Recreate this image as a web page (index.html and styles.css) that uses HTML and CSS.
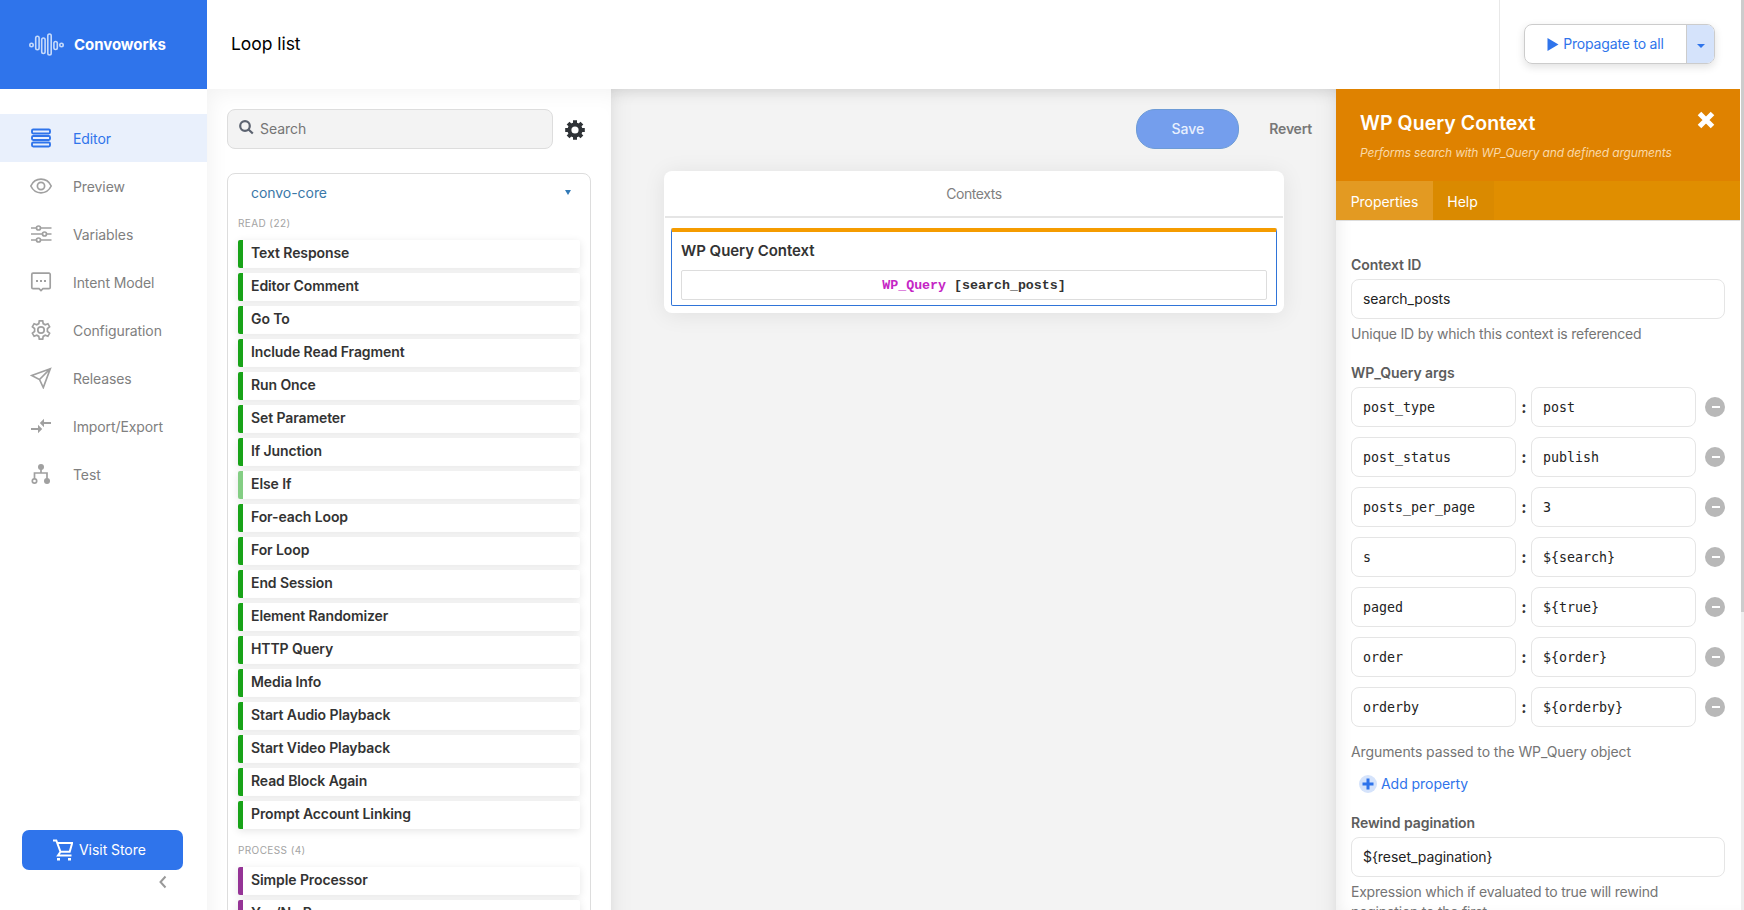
FILE: index.html
```html
<!DOCTYPE html>
<html lang="en">
  <head>
    <meta charset="UTF-8">
    <title>Convoworks - Loop list</title>
    <link rel="stylesheet" href="styles.css">
  </head>
  <body>
    <div class="app">
      <aside class="sidebar">
        <div class="brand">
          <svg class="brand-logo" width="36" height="24" viewBox="0 0 36 24">
            <circle cx="2.500" cy="12" r="1.700"/>
            <rect x="6.700" y="3.200" width="3.400" height="13.500" rx="1.700"/>
            <rect x="12.700" y="5" width="3.400" height="15.500" rx="1.700"/>
            <rect x="18.800" y="1" width="3.400" height="21" rx="1.700"/>
            <rect x="24.900" y="8.500" width="3.400" height="8" rx="1.700"/>
            <circle cx="32.500" cy="12" r="1.700"/>
          </svg>
          <span class="brand-name">Convoworks</span>
        </div>
        <nav class="nav">
          <a class="nav-item active">
            <svg viewBox="0 0 22 22"><rect x="2" y="2.500" width="18" height="4" rx="1.200"/><rect x="2" y="9" width="18" height="4" rx="1.200"/><rect x="2" y="15.500" width="18" height="4" rx="1.200"/></svg>
            <span>Editor</span>
          </a>
          <a class="nav-item">
            <svg viewBox="0 0 22 22"><path d="M.8 11C3 6.500 6.600 4.200 11 4.200S19 6.500 21.200 11C19 15.500 15.400 17.800 11 17.800S3 15.500 .8 11z"/><circle cx="11" cy="11" r="3.600"/></svg>
            <span>Preview</span>
          </a>
          <a class="nav-item">
            <svg viewBox="0 0 22 22"><path d="M1 5h5.500M10.500 5H21.500M1 11h11.500M16.500 11h5M1 17h5.500M10.500 17H21.500"/><circle cx="8.500" cy="5" r="2"/><circle cx="14.500" cy="11" r="2"/><circle cx="8.500" cy="17" r="2"/></svg>
            <span>Variables</span>
          </a>
          <a class="nav-item">
            <svg viewBox="0 0 22 22"><path d="M3 2.200h16a1.200 1.200 0 0 1 1.200 1.200v13a1.200 1.200 0 0 1-1.200 1.200h-6L11 19.600 9 17.600H3a1.200 1.200 0 0 1-1.200-1.200v-13A1.200 1.200 0 0 1 3 2.200z"/><path class="fill" d="M6 9h2v2H6zM10 9h2v2h-2zM14 9h2v2h-2z"/></svg>
            <span>Intent Model</span>
          </a>
          <a class="nav-item">
            <svg viewBox="0 0 22 22"><path d="M9.300 1.800h3.400l.5 2.800 2 1.100 2.700-1 1.700 3-2.200 1.900v2.800l2.200 1.900-1.700 3-2.700-1-2 1.100-.5 2.800H9.300l-.5-2.800-2-1.100-2.700 1-1.700-3 2.200-1.900V9.600L2.400 7.700l1.700-3 2.700 1 2-1.100z"/><circle cx="11" cy="11" r="3.200"/></svg>
            <span>Configuration</span>
          </a>
          <a class="nav-item">
            <svg viewBox="0 0 22 22"><path d="M20.300 1.700L1.700 8.500l7.800 4 3.800 8zM9.500 12.500L20.300 1.700"/></svg>
            <span>Releases</span>
          </a>
          <a class="nav-item">
            <svg viewBox="0 0 22 22"><path class="bold" d="M1 14h8M21 8h-8"/><path class="fill" d="M8 9.800v8.400l4.200-4.200zM14 3.800v8.400L9.800 8z"/></svg>
            <span>Import/Export</span>
          </a>
          <a class="nav-item">
            <svg viewBox="0 0 22 22"><path d="M11 4v6M4.500 16v-6h12.500v6"/><circle class="fill" cx="11" cy="4" r="3"/><circle cx="4.500" cy="18" r="2.200"/><circle class="fill" cx="17" cy="18" r="3"/></svg>
            <span>Test</span>
          </a>
        </nav>
        <div class="sidebar-footer">
          <a class="store-btn">
            <svg width="20" height="22" viewBox="0 0 20 22"><path d="M0 1.500h3.300l4.200 11.300h9.200l2.500-8.800H4.400M7.500 12.800L5 16.500h13.500"/><path class="fill" d="M4 19h3v2.500H4zM15 19h3v2.500h-3z"/></svg>
            <span>Visit Store</span>
          </a>
          <svg class="collapse" width="10" height="14" viewBox="0 0 10 14"><path d="M7.500 1.500L2.500 7l5 5.500"/></svg>
        </div>
      </aside>

      <div class="main">
        <header class="topbar">
          <h1 class="page-title">Loop list</h1>
          <div class="topbar-actions">
            <div class="btn-group">
              <button class="propagate">
                <svg width="12" height="13" viewBox="0 0 12 13"><path d="M.5 0L11.500 6.500.5 13z"/></svg>
                <span>Propagate to all</span>
              </button>
              <button class="caret"><svg width="8" height="4" viewBox="0 0 8 4"><path d="M0 0h8L4 4z"/></svg></button>
            </div>
          </div>
        </header>

        <div class="workspace">
          <section class="library">
            <div class="search-row">
              <div class="search">
                <svg width="15" height="15" viewBox="0 0 15 15"><circle cx="6" cy="6" r="4.800"/><path d="M9.500 9.500l4.300 4"/></svg>
                <span>Search</span>
              </div>
              <svg class="gear" width="20" height="20" viewBox="0 0 20 20">
                <circle cx="10" cy="10" r="5.600"/>
                <path d="M10 .2v4M10 15.800v4M.2 10h4M15.800 10h4M3.100 3.100l2.800 2.800M14.100 14.100l2.800 2.800M16.900 3.100l-2.800 2.800M5.900 14.100l-2.800 2.800"/>
              </svg>
            </div>
            <div class="package">
              <div class="package-head">
                <span>convo-core</span>
                <svg width="6" height="5" viewBox="0 0 6 5"><path d="M0 0h6L3 5z"/></svg>
              </div>
              <div class="group-label">READ (22)</div>
              <ul class="blocks">
                <li>Text Response</li>
                <li>Editor Comment</li>
                <li>Go To</li>
                <li>Include Read Fragment</li>
                <li>Run Once</li>
                <li>Set Parameter</li>
                <li>If Junction</li>
                <li class="light">Else If</li>
                <li>For-each Loop</li>
                <li>For Loop</li>
                <li>End Session</li>
                <li>Element Randomizer</li>
                <li>HTTP Query</li>
                <li>Media Info</li>
                <li>Start Audio Playback</li>
                <li>Start Video Playback</li>
                <li>Read Block Again</li>
                <li>Prompt Account Linking</li>
              </ul>
              <div class="group-label process">PROCESS (4)</div>
              <ul class="blocks purple">
                <li>Simple Processor</li>
                <li>Yes/No Processor</li>
              </ul>
            </div>
          </section>

          <section class="canvas">
            <div class="canvas-actions">
              <button class="save">Save</button>
              <button class="revert">Revert</button>
            </div>
            <div class="contexts">
              <div class="contexts-head">Contexts</div>
              <div class="context-item">
                <h2>WP Query Context</h2>
                <div class="code"><em>WP_Query</em> [search_posts]</div>
              </div>
            </div>
          </section>

          <section class="details">
            <div class="details-head">
              <div>
                <h2>WP Query Context</h2>
                <p>Performs search with WP_Query and defined arguments</p>
              </div>
              <svg width="18" height="18" viewBox="0 0 18 18"><path d="M2.500 2.500l13 13M15.500 2.500l-13 13"/></svg>
            </div>
            <div class="tabs">
              <a class="tab tab-properties active">Properties</a>
              <a class="tab tab-help">Help</a>
            </div>
            <div class="form">
              <label>Context ID</label>
              <div class="input">search_posts</div>
              <p class="hint">Unique ID by which this context is referenced</p>

              <label>WP_Query args</label>
              <div class="args">
                <div class="arg"><div class="input">post_type</div><b>:</b><div class="input">post</div><i class="remove"></i></div>
                <div class="arg"><div class="input">post_status</div><b>:</b><div class="input">publish</div><i class="remove"></i></div>
                <div class="arg"><div class="input">posts_per_page</div><b>:</b><div class="input">3</div><i class="remove"></i></div>
                <div class="arg"><div class="input">s</div><b>:</b><div class="input">${search}</div><i class="remove"></i></div>
                <div class="arg"><div class="input">paged</div><b>:</b><div class="input">${true}</div><i class="remove"></i></div>
                <div class="arg"><div class="input">order</div><b>:</b><div class="input">${order}</div><i class="remove"></i></div>
                <div class="arg"><div class="input">orderby</div><b>:</b><div class="input">${orderby}</div><i class="remove"></i></div>
              </div>
              <p class="hint args-hint">Arguments passed to the WP_Query object</p>
              <a class="add">
                <svg width="18" height="18" viewBox="0 0 18 18"><circle cx="9" cy="9" r="9"/><path d="M9 3.500v11M3.500 9h11"/></svg>
                <span>Add property</span>
              </a>

              <label>Rewind pagination</label>
              <div class="input">${reset_pagination}</div>
              <p class="hint">Expression which if evaluated to true will rewind<br>pagination to the first</p>
            </div>
          </section>
        </div>
      </div>
      <div class="scrollbar"><div class="scrollbar-thumb"></div></div>
    </div>
  </body>
</html>
```
FILE: styles.css
```css
* {
  box-sizing: border-box;
  margin: 0;
  padding: 0;
}

body {
  font-family: Inter, "Noto Sans", sans-serif;
  font-size: 14px;
  line-height: 20px;
  letter-spacing: -.05px;
  color: #333;
  background: #fff;
  overflow: hidden;
}

button {
  font: inherit;
  letter-spacing: inherit;
  border: 0;
  background: none;
}

svg {
  flex: none;
}

.app {
  display: flex;
  height: 910px;
}

/* sidebar */
.sidebar {
  display: flex;
  flex-direction: column;
  width: 207px;
  flex: none;
}

.brand {
  display: flex;
  align-items: center;
  height: 89px;
  padding-left: 29px;
  background: #2f74eb;
}

.brand-logo {
  fill: none;
  stroke: #c5dafb;
  stroke-width: 1.600;
}

.brand-name {
  margin-left: 9px;
  font-size: 15px;
  font-weight: 700;
  color: #fff;
}

.nav {
  padding-top: 25px;
}

.nav-item {
  display: flex;
  align-items: center;
  gap: 21px;
  height: 48px;
  padding-left: 30px;
  letter-spacing: -.1px;
  color: #808080;
}

.nav-item span {
  padding-top: 1px;
}

.nav-item svg {
  width: 22px;
  height: 22px;
  fill: none;
  stroke: #a0a0a0;
  stroke-width: 1.700;
}

.nav-item svg .fill {
  fill: #a0a0a0;
  stroke: none;
}

.nav-item svg .bold {
  stroke-width: 2;
}

.nav-item.active {
  color: #2f74eb;
  background: #e9f0fc;
}

.nav-item.active svg {
  stroke: #2f74eb;
  stroke-width: 1.900;
}

.sidebar-footer {
  display: flex;
  flex-direction: column;
  margin-top: auto;
  padding: 0 24px 21px 22px;
}

.store-btn {
  display: flex;
  align-items: center;
  gap: 6px;
  height: 40px;
  padding-left: 31px;
  border-radius: 7px;
  color: #fff;
  background: #2f74eb;
}

.store-btn svg {
  fill: none;
  stroke: #fff;
  stroke-width: 2;
}

.store-btn svg .fill {
  fill: #fff;
  stroke: none;
}

.collapse {
  align-self: flex-end;
  margin: 5px 15px 0 0;
  fill: none;
  stroke: #999;
  stroke-width: 2;
}

/* top bar */
.main {
  display: flex;
  flex-direction: column;
  width: 1533px;
  flex: none;
}

.topbar {
  display: flex;
  justify-content: space-between;
  height: 89px;
  flex: none;
}

.page-title {
  padding-left: 24px;
  font-size: 17.500px;
  font-weight: 400;
  line-height: 88px;
  color: #000;
}

.topbar-actions {
  width: 241px;
  padding: 24px 0 0 24px;
  border-left: 1px solid #e8e8e8;
}

.btn-group {
  display: flex;
  width: 191px;
  height: 40px;
  border: 1px solid #ccc;
  border-radius: 8px;
  box-shadow: 0 3px 8px rgba(0, 0, 0, .12);
  overflow: hidden;
}

.propagate {
  display: flex;
  align-items: center;
  justify-content: center;
  gap: 4px;
  flex: 1;
  letter-spacing: -.18px;
  color: #2f74eb;
}

.propagate svg,
.caret svg {
  fill: #2f74eb;
}

.caret {
  display: flex;
  align-items: center;
  justify-content: center;
  width: 28px;
  padding-top: 3px;
  border-left: 1px solid #ccc;
  background: #d5e3fb;
}

/* workspace */
.workspace {
  display: flex;
  height: 821px;
  overflow: hidden;
}

.library {
  width: 404px;
  height: 860px;
  flex: none;
  padding: 20px 20px 0;
  box-shadow: inset 8px 8px 20px -4px rgba(0, 0, 0, .05);
}

.search-row {
  display: flex;
  align-items: center;
  gap: 12px;
}

.search {
  display: flex;
  align-items: center;
  gap: 6px;
  width: 326px;
  height: 40px;
  padding-left: 11px;
  border: 1px solid #ddd;
  border-radius: 8px;
  color: #757575;
  background: #f3f3f3;
}

.search svg {
  margin-bottom: 4px;
  fill: none;
  stroke: #5c6370;
  stroke-width: 2.200;
}

.gear {
  margin-top: 1px;
  fill: none;
  stroke: #2f3337;
  stroke-width: 4;
}

.package {
  height: 800px;
  margin-top: 24px;
  padding: 0 10px;
  border: 1px solid #ddd;
  border-radius: 8px;
}

.package-head {
  display: flex;
  align-items: center;
  justify-content: space-between;
  height: 37px;
  padding: 0 9px 0 13px;
  color: #3a78a8;
}

.package-head svg {
  fill: #337ab7;
}

.group-label {
  padding-top: 5px;
  height: 29px;
  font-size: 10px;
  letter-spacing: .4px;
  line-height: 14px;
  color: #a3a3a3;
}

.group-label.process {
  height: 38px;
  padding-top: 14px;
}

.blocks {
  display: grid;
  gap: 5px;
  list-style: none;
}

.blocks li {
  height: 28px;
  padding-left: 8px;
  border-left: 5px solid #18a318;
  border-radius: 2px;
  font-weight: 600;
  line-height: 26px;
  letter-spacing: -.1px;
  color: #333;
  background: #fff;
  box-shadow: 0 2px 8px rgba(0, 0, 0, .1);
}

.blocks li.light {
  border-left-color: #84ce84;
}

.blocks.purple li {
  border-left-color: #953496;
}

/* taller than the workspace, so that the bottom shadow stays clipped */
.canvas {
  width: 725px;
  height: 860px;
  flex: none;
  padding: 20px 24px 0 53px;
  background: #f3f3f3;
  box-shadow: inset 0 8px 16px -6px rgba(0, 0, 0, .12), inset 12px 0 22px -8px rgba(0, 0, 0, .05), inset -12px 0 22px -8px rgba(0, 0, 0, .05);
}

.canvas-actions {
  display: flex;
  justify-content: flex-end;
  gap: 30px;
}

.save {
  width: 103px;
  height: 40px;
  border: 1px solid #6d9bd6;
  border-radius: 19px;
  font-weight: 500;
  color: #e8f0fe;
  background: #749eed;
}

.revert {
  font-weight: 600;
  letter-spacing: -.22px;
  color: #777;
}

.contexts {
  width: 620px;
  height: 142px;
  margin-top: 22px;
  border-radius: 8px;
  background: #fff;
  box-shadow: 0 2px 22px rgba(0, 0, 0, .08);
}

.contexts-head {
  height: 47px;
  margin: 0 1px;
  border-bottom: 2px solid #e5e5e5;
  line-height: 46px;
  letter-spacing: -.4px;
  text-align: center;
  color: #808080;
}

.context-item {
  height: 78px;
  margin: 10px 7px 0;
  padding: 9px 9px 0;
  border: 1px solid #2f74d8;
  border-top: 4px solid #f59c00;
  border-radius: 2px;
}

.context-item h2 {
  font-size: 15px;
  font-weight: 600;
  line-height: 20px;
}

.code {
  height: 30px;
  margin-top: 9px;
  border: 1px solid #ddd;
  border-radius: 2px;
  font-family: "Courier New", "Liberation Mono", monospace;
  font-size: 13.300px;
  font-weight: 700;
  line-height: 30px;
  letter-spacing: 0;
  text-align: center;
}

.code em {
  font-style: normal;
  color: #c526c5;
}

/* details panel */
.details {
  width: 404px;
  flex: none;
  box-shadow: inset 10px 0 16px -8px rgba(0, 0, 0, .08);
}

.details-head {
  display: flex;
  justify-content: space-between;
  height: 92px;
  padding: 22px 25px 0 24px;
  color: #fff;
  background: #df8200;
}

.details-head h2 {
  font-size: 19.500px;
  font-weight: 600;
  line-height: 24px;
  letter-spacing: .05px;
}

.details-head p {
  margin-top: 8px;
  font-size: 12px;
  font-style: italic;
  letter-spacing: -.16px;
  color: #fad9a8;
}

.details-head svg {
  fill: none;
  stroke: #fff;
  stroke-width: 5;
}

.tabs {
  display: flex;
  height: 40px;
  border-bottom: 1px solid #ddd;
  background: #e08e00;
}

.tab {
  line-height: 41px;
  text-align: center;
  color: #fff;
}

.tab-properties {
  width: 97px;
}

.tab-help {
  width: 61px;
  padding-right: 2px;
  background: #da8a00;
}

.tab.active {
  background: #e39a22;
}

.form {
  padding: 34px 15px 0;
}

.form label {
  display: block;
  height: 24px;
  font-weight: 600;
  color: #5c5c5c;
}

.input {
  height: 40px;
  padding-left: 11px;
  border: 1px solid #e5e5e5;
  border-radius: 8px;
  line-height: 38px;
  color: #222;
  background: #fff;
}

.hint {
  height: 44px;
  padding-top: 5px;
  letter-spacing: -.22px;
  color: #757575;
}

.args {
  display: grid;
  gap: 10px;
}

.arg {
  display: grid;
  grid-template-columns: 165px 15px 165px 29px;
  align-items: center;
}

.arg b {
  padding-left: 1px;
  font-size: 16px;
  text-align: center;
}

.arg .input {
  font-family: "DejaVu Sans Mono", monospace;
  font-size: 13.300px;
  line-height: 40px;
  letter-spacing: 0;
}

.remove {
  display: grid;
  place-items: center;
  justify-self: end;
  width: 20px;
  height: 20px;
  border-radius: 50%;
  background: #b8b8b8;
}

.remove::before {
  content: "";
  width: 8px;
  height: 2px;
  margin-left: 2px;
  background: #fff;
}

.args-hint {
  height: 47px;
  padding-top: 15px;
  letter-spacing: -.1px;
}

.add {
  display: flex;
  align-items: center;
  gap: 4px;
  height: 20px;
  margin-bottom: 19px;
  padding-left: 8px;
  color: #2f74eb;
}

.add circle {
  fill: #d5e3fb;
}

.add path {
  stroke: #2f74eb;
  stroke-width: 3;
}

/* page scrollbar */
.scrollbar {
  width: 4px;
  padding-left: 1px;
}

.scrollbar-thumb {
  height: 612px;
  background: #ccc;
  box-shadow: 0 300px 0 #eee;
}
```
